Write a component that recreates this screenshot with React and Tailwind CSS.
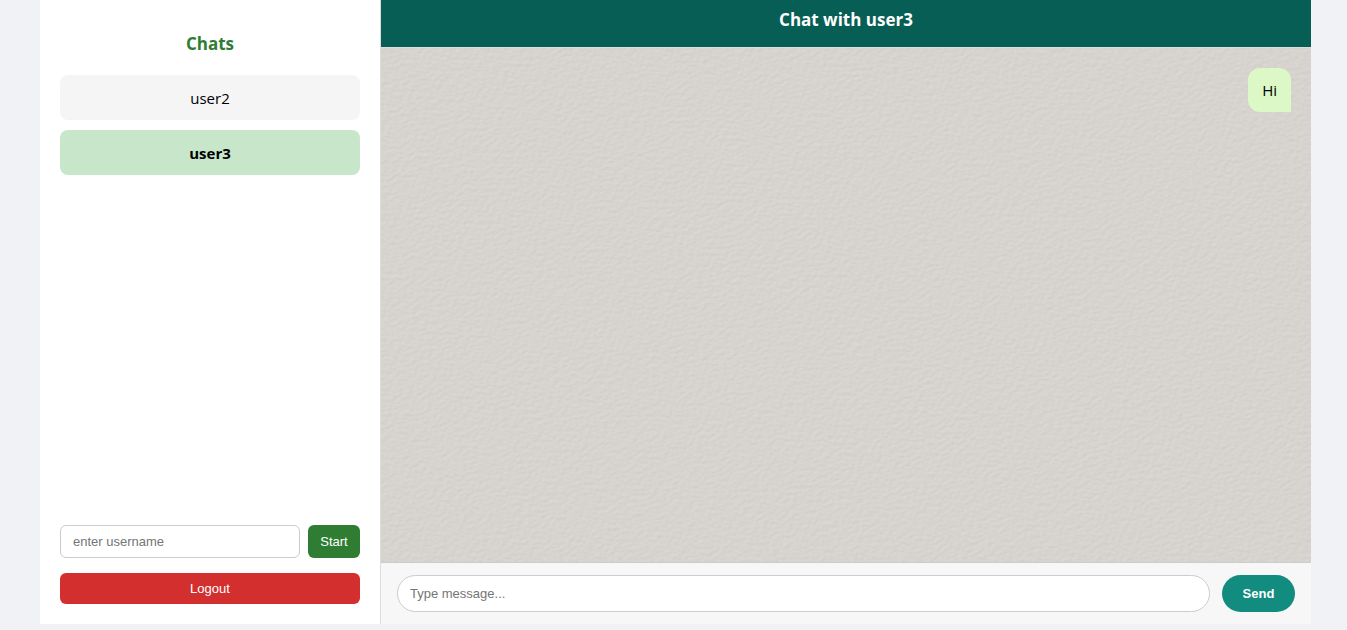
const chats = [
  { name: 'user2', active: false },
  { name: 'user3', active: true },
];

function PlasterTexture() {
  return (
    <svg className="absolute inset-0 h-full w-full opacity-20" aria-hidden="true">
      <filter id="plaster" x="0" y="0" width="100%" height="100%" colorInterpolationFilters="sRGB">
        <feTurbulence type="fractalNoise" baseFrequency="0.2 0.28" numOctaves="3" seed="8" result="noise" />
        <feDiffuseLighting in="noise" surfaceScale="0.55" diffuseConstant="1.12" lightingColor="#dbd7d2">
          <feDistantLight azimuth="235" elevation="60" />
        </feDiffuseLighting>
      </filter>
      <rect width="100%" height="100%" filter="url(#plaster)" />
    </svg>
  );
}

function Sidebar() {
  return (
    <aside className="flex w-[341px] shrink-0 flex-col border-r border-[#dddddd] bg-white p-5">
      <h2 className="mt-2 mb-4 text-center text-[17px] leading-[31px] font-bold text-[#2e7d32]">Chats</h2>
      <nav className="flex flex-1 flex-col gap-2.5">
        {chats.map((chat) => (
          <button
            key={chat.name}
            type="button"
            className={
              chat.active
                ? 'h-[45px] rounded-lg bg-[#c8e6c9] pt-0.5 text-[15px] font-bold text-black'
                : 'h-[45px] rounded-lg bg-[#f5f5f5] pt-0.5 text-[15px] text-black'
            }
          >
            {chat.name}
          </button>
        ))}
      </nav>
      <form className="flex gap-2 font-['Liberation_Sans',Arial,sans-serif] text-[13px]" onSubmit={(e) => e.preventDefault()}>
        <input
          type="text"
          aria-label="Username"
          placeholder="enter username"
          className="h-[33px] min-w-0 flex-1 rounded-md border border-[#cccccc] bg-white px-3 placeholder:text-[#757575]"
        />
        <button type="submit" className="w-[52px] rounded-md bg-[#2e7d32] text-white">Start</button>
      </form>
      <button type="button" className="mt-[15px] h-[31px] rounded-md bg-[#d32f2f] font-['Liberation_Sans',Arial,sans-serif] text-[13px] text-white">
        Logout
      </button>
    </aside>
  );
}

function Conversation() {
  return (
    <main className="flex min-w-0 flex-1 flex-col">
      <header className="border-b border-[#dddddd] bg-[#075e54] bg-clip-padding pt-2 pb-4 text-center text-white">
        <h1 className="text-[17px] leading-[23px] font-bold">Chat with user3</h1>
      </header>
      <section className="relative flex flex-1 flex-col items-end bg-[#d8d4cf] p-5" aria-label="Messages">
        <PlasterTexture />
        <p className="relative rounded-xl rounded-br-none bg-[#dcf8c6] px-3.5 py-2.5 text-[15px] leading-6 text-black">Hi</p>
      </section>
      <form
        className="flex gap-3 border-t border-[#cccccc] bg-[#f7f7f7] px-4 py-3 font-['Liberation_Sans',Arial,sans-serif] text-[13px]"
        onSubmit={(e) => e.preventDefault()}
      >
        <input
          type="text"
          aria-label="Message"
          placeholder="Type message..."
          className="h-[37px] min-w-0 flex-1 rounded-full border border-[#cccccc] bg-white px-3 placeholder:text-[#757575]"
        />
        <button type="submit" className="w-[73px] rounded-full bg-[#128c7e] font-bold text-white">Send</button>
      </form>
    </main>
  );
}

export default function App() {
  return (
    <div className="flex h-screen bg-[#f0f2f5] pr-9 pb-1.5 pl-10 font-['Segoe_UI','Open_Sans','Noto_Sans',sans-serif]">
      <Sidebar />
      <Conversation />
    </div>
  );
}
